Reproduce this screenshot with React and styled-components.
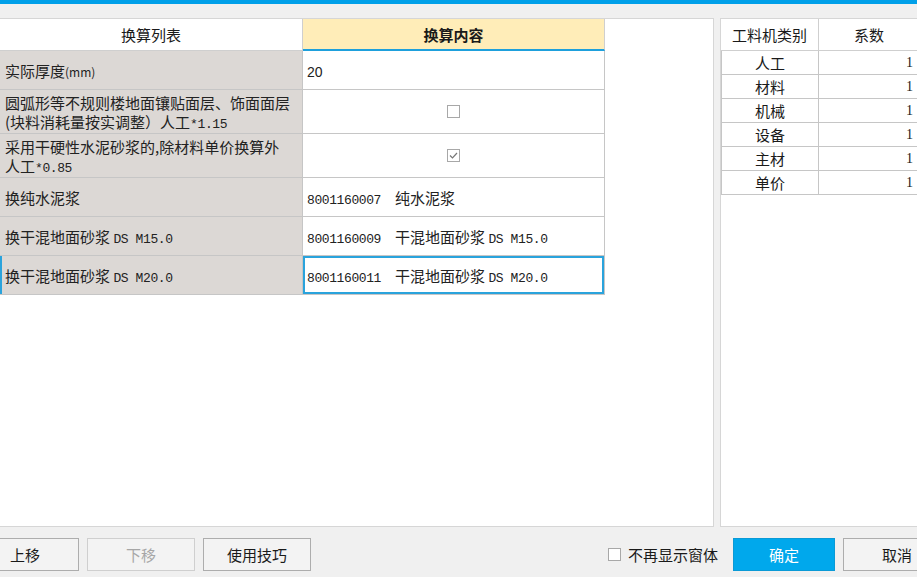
import styled, { createGlobalStyle } from 'styled-components';

const GlobalStyle = createGlobalStyle`
  html, body {
    margin: 0;
    padding: 0;
    background: #f0f0f0;
    overflow: hidden;
  }
  body {
    font-family: "Noto Sans CJK SC", "Liberation Sans", sans-serif;
    color: #1a1a1a;
  }
`;

const Page = styled.div`
  width: 917px;
  height: 577px;
  display: flex;
  flex-direction: column;
  overflow: hidden;
`;

const TopBar = styled.div`
  height: 4px;
  background: #00a0e9;
  flex-shrink: 0;
`;

const Body = styled.div`
  display: flex;
  gap: 6px;
  padding-top: 14px;
  height: 523px;
  box-sizing: border-box;
  flex-shrink: 0;
`;

const LeftPanel = styled.div`
  width: 714px;
  box-sizing: border-box;
  background: #fff;
  border: 1px solid #d6d6d6;
  border-left: none;
`;

const RightPanel = styled.div`
  flex: 1;
  margin-right: -4px;
  background: #fff;
  border: 1px solid #d6d6d6;
`;

const Grid = styled.div`
  width: 605px;
`;

const Row = styled.div`
  display: grid;
  grid-template-columns: 303px 302px;
  height: ${(p) => p.$h}px;
`;

const HeadCell = styled.div`
  display: flex;
  align-items: center;
  justify-content: center;
  font-size: 15px;
  box-sizing: border-box;
  border-right: 1px solid #cfcfcf;
  border-bottom: ${(p) => (p.$active ? '2px solid #1ea0dc' : '1px solid #cfcfcf')};
  background: ${(p) => (p.$active ? '#ffedb8' : '#fff')};
  font-weight: ${(p) => (p.$active ? 700 : 400)};
`;

const NameCell = styled.div`
  display: flex;
  align-items: center;
  padding: 0 5px;
  box-sizing: border-box;
  background: #dcd8d5;
  border-right: 1px solid #c6c6c6;
  border-bottom: 1px solid #c6c6c6;
  box-shadow: ${(p) => (p.$sel ? 'inset 2px 0 0 #2aa3dc' : 'none')};
  font-size: 15px;
  line-height: 19px;
  color: #222;
`;

const ValueCell = styled.div`
  display: flex;
  align-items: center;
  justify-content: ${(p) => (p.$center ? 'center' : 'flex-start')};
  padding: 0 4px;
  box-sizing: border-box;
  background: #fff;
  border-right: 1px solid #c6c6c6;
  border-bottom: 1px solid #c6c6c6;
  box-shadow: ${(p) => (p.$sel ? 'inset 0 0 0 2px #2aa3dc' : 'none')};
  font-size: 15px;
  color: #222;
`;

const Mono = styled.span`
  font-family: "Liberation Mono", monospace;
  font-size: 13px;
  line-height: 1;
  letter-spacing: -0.4px;
`;

const Code = styled(Mono)`
  margin-right: 14px;
`;

const Plain = styled.span`
  font-family: "Liberation Sans", sans-serif;
  font-size: 14px;
`;

const Small = styled.span`
  font-size: 12px;
  line-height: 1;
`;

const Box = styled.span`
  width: 13px;
  height: 13px;
  box-sizing: border-box;
  border: 1px solid #a8a8a8;
  background: #fff;
  display: inline-flex;
  align-items: center;
  justify-content: center;
  flex-shrink: 0;
`;

const CheckBox = ({ checked }) => (
  <Box>
    {checked && (
      <svg width="9" height="9" viewBox="0 0 9 9">
        <path d="M1 4.5 L3.5 7 L8 2" fill="none" stroke="#777" strokeWidth="1.2" />
      </svg>
    )}
  </Box>
);

const SideGrid = styled.div`
  display: grid;
  grid-template-columns: 98px 1fr;
`;

const SideHead = styled.div`
  height: 32px;
  display: flex;
  align-items: center;
  justify-content: center;
  font-size: 15px;
  box-sizing: border-box;
  border-right: 1px solid #cfcfcf;
  border-bottom: 1px solid #cfcfcf;
`;

const SideCell = styled.div`
  height: 24px;
  display: flex;
  align-items: center;
  justify-content: ${(p) => (p.$right ? 'flex-end' : 'center')};
  padding: 0 6px;
  box-sizing: border-box;
  border-right: 1px solid #c6c6c6;
  border-bottom: 1px solid #c6c6c6;
  border-left: ${(p) => (p.$right ? 'none' : '1px solid #c6c6c6')};
  font-size: ${(p) => (p.$right ? '14px' : '15px')};
  font-family: ${(p) => (p.$right ? '"Liberation Serif", serif' : 'inherit')};
`;

const Footer = styled.div`
  display: flex;
  align-items: center;
  gap: 8px;
  padding-top: 11px;
  margin: 0 -34px 0 -29px;
`;

const Button = styled.button`
  width: ${(p) => (p.$primary ? '102px' : '108px')};
  height: 33px;
  box-sizing: border-box;
  font-family: inherit;
  font-size: 15px;
  background: ${(p) => (p.$primary ? '#00a8ec' : '#f3f3f3')};
  color: ${(p) => (p.$primary ? '#fff' : p.disabled ? '#a6a6a6' : '#1a1a1a')};
  border: 1px solid ${(p) => (p.$primary ? '#0a9ad6' : p.disabled ? '#cfcfcf' : '#adadad')};
  padding: 0;
`;

const Spacer = styled.div`
  flex: 1;
`;

const Check = styled.label`
  display: flex;
  align-items: center;
  gap: 7px;
  font-size: 15px;
  margin-right: 7px;
`;

const rows = [
  { h: 39, name: <>实际厚度<Small>(mm)</Small></>, value: <Plain>20</Plain> },
  {
    h: 44,
    name: <>圆弧形等不规则楼地面镶贴面层、饰面面层<br />(块料消耗量按实调整）人工<Mono>*1.15</Mono></>,
    box: false,
  },
  {
    h: 44,
    name: <>采用干硬性水泥砂浆的,除材料单价换算外<br />人工<Mono>*0.85</Mono></>,
    box: true,
  },
  { h: 39, name: '换纯水泥浆', value: <><Code>8001160007</Code>纯水泥浆</> },
  {
    h: 39,
    name: <>换干混地面砂浆 <Mono>DS M15.0</Mono></>,
    value: <><Code>8001160009</Code>干混地面砂浆 <Mono>DS M15.0</Mono></>,
  },
  {
    h: 39,
    sel: true,
    name: <>换干混地面砂浆 <Mono>DS M20.0</Mono></>,
    value: <><Code>8001160011</Code>干混地面砂浆 <Mono>DS M20.0</Mono></>,
  },
];

const factors = ['人工', '材料', '机械', '设备', '主材', '单价'];

export default function App() {
  return (
    <Page>
      <GlobalStyle />
      <TopBar />
      <Body>
        <LeftPanel>
          <Grid>
            <Row $h={32}>
              <HeadCell>换算列表</HeadCell>
              <HeadCell $active>换算内容</HeadCell>
            </Row>
            {rows.map((r, i) => (
              <Row key={i} $h={r.h}>
                <NameCell $sel={r.sel}>
                  <span>{r.name}</span>
                </NameCell>
                <ValueCell $sel={r.sel} $center={r.box !== undefined}>
                  {r.box !== undefined ? <CheckBox checked={r.box} /> : <span>{r.value}</span>}
                </ValueCell>
              </Row>
            ))}
          </Grid>
        </LeftPanel>
        <RightPanel>
          <SideGrid>
            <SideHead>工料机类别</SideHead>
            <SideHead>系数</SideHead>
            {factors.map((f) => [
              <SideCell key={f}>{f}</SideCell>,
              <SideCell key={f + 'v'} $right>1</SideCell>,
            ])}
          </SideGrid>
        </RightPanel>
      </Body>
      <Footer>
        <Button>上移</Button>
        <Button disabled>下移</Button>
        <Button>使用技巧</Button>
        <Spacer />
        <Check>
          <CheckBox />
          不再显示窗体
        </Check>
        <Button $primary>确定</Button>
        <Button>取消</Button>
      </Footer>
    </Page>
  );
}
